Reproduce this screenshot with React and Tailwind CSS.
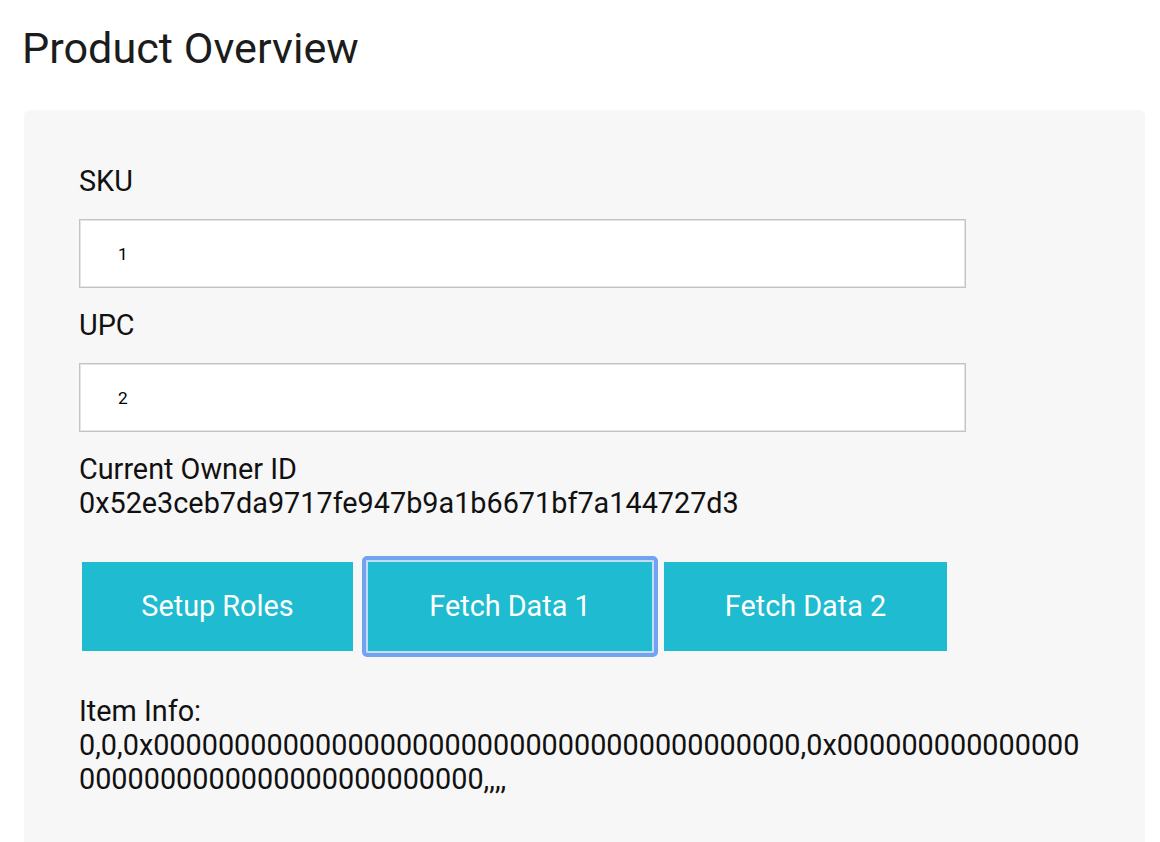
import { useState } from 'react';

const font = { fontFamily: 'Roboto, "Noto Sans", sans-serif' };

function Field({ label, value, onChange }) {
  return (
    <div className="mb-[20px]">
      <label className="block mb-[21px] text-[28.8px] leading-[normal] text-[#111]">{label}</label>
      <input
        value={value}
        onChange={(e) => onChange(e.target.value)}
        className="block w-[887px] h-[69px] bg-white border border-[#c3c3c3] shadow-[inset_0_0_0_1px_#e4e4e4] pl-[38px] text-[17.3px] text-black outline-none"
      />
    </div>
  );
}

export default function App() {
  const [sku, setSku] = useState('1');
  const [upc, setUpc] = useState('2');

  const owner = '0x52e3ceb7da9717fe947b9a1b6671bf7a144727d3';
  const itemInfo =
    '0,0,0x' + '0'.repeat(40) + ',0x' + '0'.repeat(40) + ',,,,';

  return (
    <div className="min-h-screen bg-white overflow-hidden" style={font}>
      <h1 className="ml-[22px] pt-[23px] text-[43.2px] leading-[normal] font-normal text-[#1c1c1c]">
        Product Overview
      </h1>

      {/* Card */}
      <div className="mt-[36px] ml-[24px] w-[1121px] h-[760px] bg-[#f7f7f7] rounded-[6px] pt-[54px] px-[55px]">
        <Field label="SKU" value={sku} onChange={setSku} />
        <Field label="UPC" value={upc} onChange={setUpc} />

        <div className="text-[28.8px] leading-[normal] text-[#111]">
          <div>Current Owner ID</div>
          <div>{owner}</div>
        </div>

        {/* Buttons */}
        <div className="flex items-center mt-[36px]">
          <button className="ml-[3px] w-[271px] h-[89px] bg-[#1fbbd1] text-white text-[28.8px]">
            Setup Roles
          </button>
          <span className="ml-[9px] inline-flex rounded-[5px] border-[4px] border-[#72a3f1] p-[2px] bg-[#c6dbf5]">
            <button className="w-[284px] h-[89px] bg-[#1fbbd1] text-white text-[28.8px]">
              Fetch Data 1
            </button>
          </span>
          <button className="ml-[6px] w-[283px] h-[89px] bg-[#1fbbd1] text-white text-[28.8px]">
            Fetch Data 2
          </button>
        </div>

        <div className="mt-[37px] text-[28.8px] leading-[normal] text-[#111]">
          <div>Item Info:</div>
          <div className="break-all">{itemInfo}</div>
        </div>
      </div>
    </div>
  );
}
